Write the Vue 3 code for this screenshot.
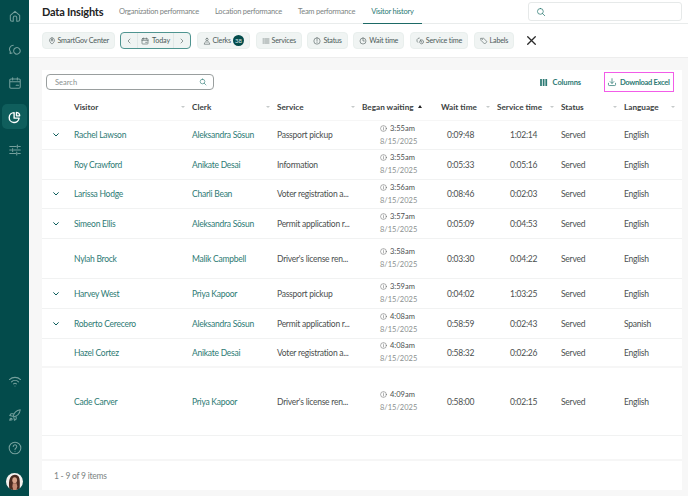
<template>
  <div class="app">
    <aside class="sidebar">
      <div class="nav-top">
        <span v-for="n in navTop" :key="n.id" class="nav-item" :class="{ active: n.active }">
          <svg viewBox="0 0 24 24" class="nav-icon"><path :d="icons[n.id]" /></svg>
        </span>
      </div>
      <div class="nav-bottom">
        <span v-for="n in navBottom" :key="n" class="nav-item">
          <svg viewBox="0 0 24 24" class="nav-icon"><path :d="icons[n]" /></svg>
        </span>
        <span class="avatar">
          <svg viewBox="0 0 20 20">
            <circle cx="10" cy="10" r="10" fill="#f4f1ee" />
            <path d="M3.800 17.500c-.6-4-.4-9 1-11.500C6 3.500 8.500 2.200 10.500 2.200c2.800 0 4.700 1.600 5.300 4.300.6 3.500.6 7 .3 11-1.600 1.700-3.800 2.500-6 2.500s-4.700-.9-6.300-2.500z" fill="#4a2a20" />
            <ellipse cx="10.200" cy="8.600" rx="2.800" ry="3.600" fill="#d9a58c" />
            <path d="M8 12h4.500l.8 4-1 4h-3.800l-1-4z" fill="#c48a73" />
          </svg>
        </span>
      </div>
    </aside>

    <main class="main">
      <header class="topbar">
        <h1>Data Insights</h1>
        <nav class="tabs">
          <a v-for="t in tabs" :key="t" class="tab" :class="{ current: t === 'Visitor history' }">{{ t }}</a>
        </nav>
        <div class="top-search">
          <svg viewBox="0 0 24 24" class="i10 teal"><path :d="icons.search" /></svg>
        </div>
      </header>

      <section class="filters">
        <button class="chip location">
          <svg viewBox="0 0 24 24" class="i9"><path :d="icons.pin" /></svg>SmartGov Center
        </button>
        <div class="date-group">
          <span class="date-arrow"><svg viewBox="0 0 24 24" class="i8"><path d="M15 6l-6 6 6 6" /></svg></span>
          <span class="date-mid"><svg viewBox="0 0 24 24" class="i9"><path :d="icons.calendar" /></svg>Today</span>
          <span class="date-arrow"><svg viewBox="0 0 24 24" class="i8"><path d="M9 6l6 6-6 6" /></svg></span>
        </div>
        <button v-for="c in chips" :key="c.label" class="chip">
          <svg viewBox="0 0 24 24" class="i9"><path :d="icons[c.icon]" /></svg>{{ c.label }}
          <span v-if="c.badge" class="badge">{{ c.badge }}</span>
        </button>
        <svg viewBox="0 0 24 24" class="close"><path d="M5 5l14 14M19 5L5 19" /></svg>
      </section>

      <section class="content">
        <div class="card">
          <div class="toolbar">
            <div class="search">
              <span>Search</span>
              <svg viewBox="0 0 24 24" class="i9 teal"><path :d="icons.search" /></svg>
            </div>
            <button class="tool-btn columns">
              <svg viewBox="0 0 10 8" class="col-icon"><path d="M0 0h2v8H0zM3 0h2v8H3zM6 0h2v8H6z" /></svg>Columns
            </button>
            <button class="tool-btn download">
              <svg viewBox="0 0 24 24" class="i10"><path d="M12 4v11M7.500 11l4.500 4.500 4.500-4.500M3.500 15v3.500a2 2 0 002 2h13a2 2 0 002-2V15" /></svg>Download Excel
            </button>
          </div>

          <div class="row head">
            <div></div>
            <div v-for="h in headers" :key="h.label" class="th">
              <span>{{ h.label }}</span>
              <i v-if="h.asc" class="caret-up"></i>
              <i v-else class="caret"></i>
            </div>
          </div>

          <div v-for="r in rows" :key="r.visitor" class="row body" :class="{ strong: r.strong }" :style="{ height: r.h + 'px' }">
            <div class="expander">
              <svg v-if="r.exp" viewBox="0 0 24 24" class="chev"><path d="M5 8l7 7 7-7" /></svg>
            </div>
            <a class="link">{{ r.visitor }}</a>
            <a class="link">{{ r.clerk }}</a>
            <div class="service">{{ r.service }}</div>
            <div class="began">
              <div class="time"><svg viewBox="0 0 24 24" class="info"><circle cx="12" cy="12" r="10" /><path d="M12 11v6M12 7v1" /></svg>{{ r.time }}</div>
              <div class="date">8/15/2025</div>
            </div>
            <div class="wait">{{ r.wait }}</div>
            <div class="stime">{{ r.stime }}</div>
            <div>Served</div>
            <div>{{ r.lang }}</div>
          </div>
          <div class="empty"></div>

          <footer class="pager">1 - 9 of 9 items</footer>
        </div>
      </section>
    </main>
  </div>
</template>

<script setup>
const icons = {
  home: 'M4 11l8-7 8 7v7a3 3 0 01-3 3h-2v-6a3 3 0 00-6 0v6H7a3 3 0 01-3-3z',
  chat: 'M9 4a6.500 6.500 0 00-5 10.500L3.500 18l3.500-1M12 9a5.500 5.500 0 11-1 8 5.500 5.500 0 011-8z',
  calendar: 'M5 5h14a2 2 0 012 2v12a2 2 0 01-2 2H5a2 2 0 01-2-2V7a2 2 0 012-2zM3 10h18M8 3v4M16 3v4M14 16h4',
  pie: 'M10.500 4.500a8.500 8.500 0 108.500 9.500h-8.500zM14.500 4a6 6 0 015.500 6h-5.500z',
  sliders: 'M3 6h11M18 6h3M16 3.500v5M3 12h3M10 12h11M8 9.500v5M3 18h10M17 18h4M15 15.500v5',
  wifi: 'M2.500 9.500a14 14 0 0119 0M6 13.500a9 9 0 0112 0M9.500 17a4 4 0 015 0M12 20.500v.1',
  rocket: 'M9 14c1-5 5-10 12-11-1 7-6 11-11 12zM9 10H5l-2 3 5 1M14 15v4l-3 2-1-5M4 18a2 2 0 013 2l-4 1z',
  help: 'M12 2a10 10 0 100 20 10 10 0 000-20zM9 9.500a3 3 0 115 2.300c-1.200.9-2 1.400-2 2.700M12 17.500v.1',
  search: 'M10.500 3.500a7 7 0 100 14 7 7 0 000-14zM15.500 15.500L21 21',
  pin: 'M12 2.500a7.500 7.500 0 00-7.500 7.500c0 5 7.500 11.500 7.500 11.500s7.500-6.500 7.500-11.500A7.500 7.500 0 0012 2.500zM12 7.500a2.500 2.500 0 100 5 2.500 2.500 0 000-5z',
  person: 'M12 4a3.500 3.500 0 100 7 3.500 3.500 0 000-7zM4 20.500c.5-4.500 3.500-6 4.500-6.500 2 1.500 5 1.500 7 0 1 .5 4 2 4.500 6.500z',
  list: 'M3 6h2M8 6h13M3 12h2M8 12h13M3 18h2M8 18h13',
  clock: 'M12 2.500a9.500 9.500 0 100 19 9.500 9.500 0 000-19zM12 7v5.500M12 16v.5',
  timer: 'M12 3a9 9 0 100 18 9 9 0 000-18zM12 7v5h4',
  stime: 'M10 3a7.500 7.500 0 00-5 13M14 9a6 6 0 11-1 10 6 6 0 011-10zM15 12v3h3',
  label: 'M3 4h8l10 10-7 7L4 11zM7.500 7.500v.1',
}

const navTop = [
  { id: 'home' },
  { id: 'chat' },
  { id: 'calendar' },
  { id: 'pie', active: true },
  { id: 'sliders' },
]
const navBottom = ['wifi', 'rocket', 'help']

const tabs = ['Organization performance', 'Location performance', 'Team performance', 'Visitor history']

const chips = [
  { label: 'Clerks', icon: 'person', badge: '38' },
  { label: 'Services', icon: 'list' },
  { label: 'Status', icon: 'clock' },
  { label: 'Wait time', icon: 'timer' },
  { label: 'Service time', icon: 'stime' },
  { label: 'Labels', icon: 'label' },
]

const headers = [
  { label: 'Visitor' },
  { label: 'Clerk' },
  { label: 'Service' },
  { label: 'Began waiting', asc: true },
  { label: 'Wait time' },
  { label: 'Service time' },
  { label: 'Status' },
  { label: 'Language' },
]

const rows = [
  { visitor: 'Rachel Lawson', clerk: 'Aleksandra Sōsun', service: 'Passport pickup', time: '3:55am', wait: '0:09:48', stime: '1:02:14', lang: 'English', exp: true, h: 29 },
  { visitor: 'Roy Crawford', clerk: 'Anikate Desai', service: 'Information', time: '3:55am', wait: '0:05:33', stime: '0:05:16', lang: 'English', h: 30 },
  { visitor: 'Larissa Hodge', clerk: 'Charli Bean', service: 'Voter registration a...', time: '3:56am', wait: '0:08:46', stime: '0:02:03', lang: 'English', exp: true, h: 29 },
  { visitor: 'Simeon Ellis', clerk: 'Aleksandra Sōsun', service: 'Permit application r...', time: '3:57am', wait: '0:05:09', stime: '0:04:53', lang: 'English', exp: true, h: 30 },
  { visitor: 'Nylah Brock', clerk: 'Malik Campbell', service: "Driver's license ren...", time: '3:58am', wait: '0:03:30', stime: '0:04:22', lang: 'English', h: 40 },
  { visitor: 'Harvey West', clerk: 'Priya Kapoor', service: 'Passport pickup', time: '3:59am', wait: '0:04:02', stime: '1:03:25', lang: 'English', exp: true, h: 30 },
  { visitor: 'Roberto Cerecero', clerk: 'Aleksandra Sōsun', service: 'Permit application r...', time: '4:08am', wait: '0:58:59', stime: '0:02:43', lang: 'Spanish', exp: true, h: 30 },
  { visitor: 'Hazel Cortez', clerk: 'Anikate Desai', service: 'Voter registration a...', time: '4:08am', wait: '0:58:32', stime: '0:02:26', lang: 'English', h: 29, strong: true },
  { visitor: 'Cade Carver', clerk: 'Priya Kapoor', service: "Driver's license ren...", time: '4:09am', wait: '0:58:00', stime: '0:02:15', lang: 'English', h: 68 },
]
</script>

<style>
html,
body {
  margin: 0;
  background: #f7f7f7;
}
</style>

<style scoped>
.app {
  display: flex;
  width: 688px;
  height: 496px;
  overflow: hidden;
  font-family: Lato, "Noto Sans", sans-serif;
  font-size: 8.500px;
  letter-spacing: -0.250px;
  color: #4b4f4f;
}

svg {
  fill: none;
  stroke: currentColor;
  stroke-width: 1.800;
  stroke-linecap: round;
  stroke-linejoin: round;
  flex: none;
}

/* sidebar */
.sidebar {
  width: 29px;
  flex: none;
  background: #034b4b;
  display: flex;
  flex-direction: column;
  justify-content: space-between;
  align-items: center;
  color: #75a09d;
}
.nav-top {
  display: flex;
  flex-direction: column;
  gap: 8.500px;
  padding-top: 3.500px;
}
.nav-bottom {
  display: flex;
  flex-direction: column;
  align-items: center;
  gap: 8.500px;
  padding-bottom: 6px;
}
.nav-item {
  width: 25px;
  height: 25px;
  border-radius: 5px;
  display: flex;
  align-items: center;
  justify-content: center;
}
.nav-item.active {
  background: #0f5e5c;
  color: #fff;
}
.nav-item.active svg {
  stroke-width: 2.400;
}
.nav-icon {
  width: 14px;
  height: 14px;
}
.avatar {
  width: 17px;
  height: 17px;
  margin-top: 4px;
}
.avatar svg {
  display: block;
  width: 17px;
  height: 17px;
  stroke: none;
}

/* top bar */
.main {
  flex: 1;
  min-width: 0;
  display: flex;
  flex-direction: column;
}
.topbar {
  height: 23px;
  background: #fff;
  border-bottom: 1px solid #e9ecec;
  display: flex;
  align-items: center;
  padding: 0 6px 0 13px;
}
h1 {
  margin: 0;
  width: 69px;
  font-size: 11px;
  font-weight: 700;
  letter-spacing: -0.200px;
  color: #222;
  white-space: nowrap;
}
.tabs {
  display: flex;
  height: 100%;
}
.tab {
  display: flex;
  align-items: center;
  padding: 0 8px;
  color: #7d8484;
  font-size: 7.500px;
  letter-spacing: -0.250px;
  box-sizing: border-box;
  border-bottom: 1px solid transparent;
  white-space: nowrap;
}
.tab.current {
  color: #2d7a74;
  border-bottom-color: #1d6a66;
  height: 24px;
}
.top-search {
  margin-left: auto;
  width: 154px;
  height: 19px;
  box-sizing: border-box;
  border: 1px solid #e6e9e9;
  border-radius: 3px;
  display: flex;
  align-items: center;
  padding-left: 7px;
}
.teal {
  color: #2d7a74;
}
.i8 {
  width: 8px;
  height: 8px;
}
.i9 {
  width: 8px;
  height: 8px;
}
.i10 {
  width: 10px;
  height: 10px;
}

/* filters */
.filters {
  height: 34px;
  box-sizing: border-box;
  background: #fff;
  border-bottom: 1px solid #ededed;
  display: flex;
  align-items: center;
  gap: 5.500px;
  padding-left: 13px;
}
.chip {
  height: 17px;
  box-sizing: border-box;
  border: 1px solid #e9efed;
  border-radius: 4px;
  background: #f0f4f3;
  color: #4d5b5a;
  font: inherit;
  font-size: 7.200px;
  letter-spacing: -0.200px;
  display: flex;
  align-items: center;
  gap: 2px;
  padding: 0 5px;
  white-space: nowrap;
}
.chip.location {
  padding: 0 4.500px;
}
.badge {
  width: 11px;
  height: 11px;
  border-radius: 50%;
  background: #034b4b;
  color: #dfeeec;
  font-size: 6px;
  letter-spacing: 0;
  display: flex;
  align-items: center;
  justify-content: center;
}
.date-group {
  height: 17px;
  width: 71px;
  box-sizing: border-box;
  border: 1px solid #4f9490;
  border-radius: 4px;
  background: #f0f4f3;
  display: flex;
  align-items: center;
  color: #4d5b5a;
  font-size: 7.200px;
  letter-spacing: -0.100px;
}
.date-arrow {
  width: 16px;
  height: 100%;
  display: flex;
  align-items: center;
  justify-content: center;
}
.date-mid {
  flex: 1;
  height: 100%;
  border-left: 1px solid #e1e8e7;
  border-right: 1px solid #e1e8e7;
  display: flex;
  align-items: center;
  justify-content: center;
  gap: 3px;
}
.close {
  width: 13px;
  height: 13px;
  margin-left: 5.500px;
  color: #2a2a2a;
  stroke-width: 2.400;
}

/* card */
.content {
  flex: 1;
  min-height: 0;
  padding: 12px 6px 6px 13px;
  background: #f7f7f7;
  display: flex;
}
.card {
  flex: 1;
  background: #fff;
  display: flex;
  flex-direction: column;
}
.toolbar {
  height: 24px;
  display: flex;
  align-items: center;
  padding-left: 4px;
  padding-right: 8px;
  flex: none;
}
.search {
  width: 168px;
  height: 16px;
  box-sizing: border-box;
  border: 1px solid #9a9f9f;
  border-radius: 4px;
  display: flex;
  align-items: center;
  justify-content: space-between;
  padding: 0 6px 0 8px;
  color: #8a9090;
  font-size: 7.500px;
  letter-spacing: 0;
}
.tool-btn {
  font: inherit;
  font-size: 7.500px;
  letter-spacing: -0.100px;
  font-weight: 700;
  color: #2d7a74;
  background: none;
  border: 0;
  display: flex;
  align-items: center;
  white-space: nowrap;
}
.columns {
  margin-left: auto;
  gap: 4px;
  padding: 0;
  margin-right: 23px;
}
.col-icon {
  width: 9px;
  height: 7px;
  fill: currentColor;
  stroke: none;
}
.download {
  box-sizing: border-box;
  width: 70px;
  height: 20px;
  border: 1px solid #f25ce8;
  letter-spacing: -0.300px;
  gap: 3px;
  padding: 0 0 0 2px;
}

/* table */
.row {
  display: grid;
  grid-template-columns: 32px 118px 85px 85px 79px 56px 64px 63px 58px;
  align-items: center;
  flex: none;
}
.head {
  height: 27px;
  padding-bottom: 1px;
  box-sizing: border-box;
  border-bottom: 1px solid #f6f6f6;
  font-weight: 700;
  font-size: 8.200px;
  letter-spacing: 0;
  color: #3d4343;
}
.th {
  display: flex;
  align-items: center;
  padding-right: 7px;
  white-space: nowrap;
}
.caret {
  margin-left: auto;
  border: 2px solid transparent;
  border-top: 2.500px solid #c6caca;
  border-bottom-width: 0;
}
.caret-up {
  margin-left: 4px;
  border: 2.500px solid transparent;
  border-bottom: 3px solid #222;
  border-top-width: 0;
}
.body {
  box-sizing: border-box;
  border-bottom: 1px solid #f1f2f2;
}
.body.strong {
  border-bottom: 2px solid #f6f6f6;
}
.expander {
  padding-left: 10px;
  display: flex;
}
.chev {
  width: 8px;
  height: 8px;
  color: #0c5c5a;
  stroke-width: 3;
}
.link {
  color: #2d7a74;
}
.began {
  padding-left: 18px;
  line-height: 13px;
  font-size: 7.500px;
  letter-spacing: 0;
}
.time {
  display: flex;
  align-items: center;
  gap: 3px;
  margin-top: -1px;
}
.info {
  width: 7px;
  height: 7px;
  stroke-width: 1.500;
}
.date {
  color: #8b9090;
  font-size: 7.500px;
}
.wait {
  padding-left: 6px;
}
.stime {
  padding-left: 13px;
}
.empty {
  flex: 1;
  border-bottom: 2px solid #f6f6f6;
}
.pager {
  height: 29px;
  flex: none;
  display: flex;
  align-items: center;
  padding-left: 12px;
  color: #7d8484;
  font-size: 8.500px;
}
</style>
